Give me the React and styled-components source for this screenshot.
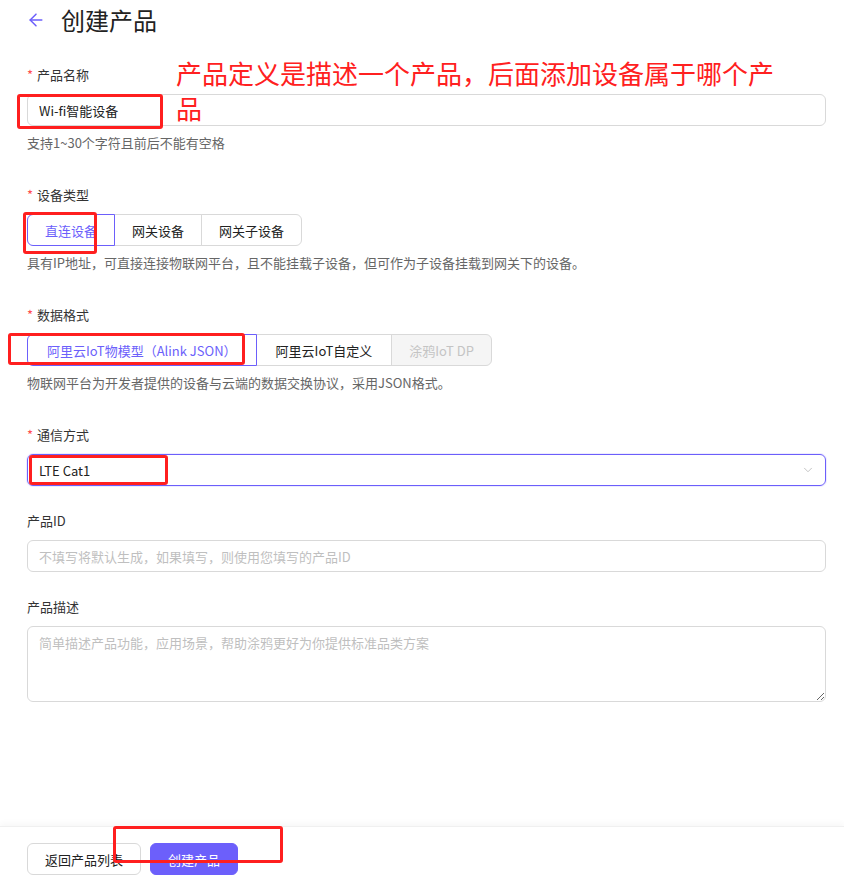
import styled, { createGlobalStyle } from 'styled-components';
import { ArrowLeft, ChevronDown } from 'lucide-react';

const GlobalStyle = createGlobalStyle`
  * { box-sizing: border-box; }
  body {
    margin: 0;
    background: #fff;
    font-family: "Noto Sans CJK SC", "Noto Sans", sans-serif;
    color: #333;
  }
`;

const PRIMARY = '#6c5ffb';

const Page = styled.div`
  position: relative;
  width: 844px;
  height: 887px;
  display: flex;
  flex-direction: column;
  overflow: hidden;
`;

const Header = styled.div`
  display: flex;
  align-items: center;
  gap: 15px;
  height: 40px;
  padding-left: 26px;
`;

const Title = styled.h1`
  margin: 0;
  font-size: 24px;
  font-weight: 400;
  color: #222;
  line-height: 40px;
`;

const Form = styled.div`
  display: flex;
  flex-direction: column;
  padding: 24px 18px 0 27px;
`;

const Item = styled.div`
  display: flex;
  flex-direction: column;
  gap: 8px;
  margin-bottom: ${(p) => (p.$help ? '30px' : '24px')};
`;

const Label = styled.div`
  font-size: 13px;
  line-height: 22px;
  color: #333;
  &::before {
    content: ${(p) => (p.$required ? '"*"' : 'none')};
    color: #ff4d4f;
    margin-right: 4px;
  }
`;

const Help = styled.div`
  font-size: 13px;
  line-height: 22px;
  color: #666;
  margin-top: -2px;
`;

const Input = styled.input`
  height: 32px;
  width: 100%;
  border: 1px solid #d9d9d9;
  border-radius: 6px;
  padding: 0 11px;
  font-family: inherit;
  font-size: 13px;
  color: #222;
  outline: none;
  &::placeholder { color: #bfbfbf; }
`;

const TextArea = styled.textarea`
  height: 76px;
  width: 100%;
  border: 1px solid #d9d9d9;
  border-radius: 6px;
  padding: 6px 11px;
  font-family: inherit;
  font-size: 13px;
  line-height: 20px;
  outline: none;
  &::placeholder { color: #bfbfbf; }
`;

const Select = styled.div`
  height: 32px;
  display: flex;
  align-items: center;
  justify-content: space-between;
  border: 1px solid ${PRIMARY};
  border-radius: 6px;
  padding: 0 10px 0 11px;
  font-size: 13px;
  color: #222;
  box-shadow: 0 0 0 1px rgba(108, 95, 251, 0.12);
`;

const Segmented = styled.div`
  display: flex;
`;

const SegButton = styled.div`
  height: 32px;
  display: flex;
  align-items: center;
  padding: 0 ${(p) => (p.$wide ? '19px' : '17px')};
  font-size: 13px;
  border: 1px solid ${(p) => (p.$active ? PRIMARY : '#d9d9d9')};
  margin-left: -1px;
  position: ${(p) => (p.$active ? 'relative' : 'static')};
  z-index: ${(p) => (p.$active ? 1 : 0)};
  color: ${(p) => (p.$active ? PRIMARY : p.$disabled ? '#c4c4c4' : '#222')};
  background: ${(p) => (p.$disabled ? '#f5f5f5' : '#fff')};
  &:first-child {
    margin-left: 0;
    border-radius: 6px 0 0 6px;
  }
  &:last-child { border-radius: 0 6px 6px 0; }
`;

const Footer = styled.div`
  margin-top: auto;
  display: flex;
  gap: 9px;
  padding: 16px 27px 12px;
  border-top: 1px solid #f0f0f0;
  box-shadow: 0 -3px 6px rgba(0, 0, 0, 0.03);
`;

const Button = styled.button`
  height: 32px;
  padding: 0 17px;
  border-radius: 6px;
  font-family: inherit;
  font-size: 13px;
  border: 1px solid ${(p) => (p.$primary ? PRIMARY : '#d9d9d9')};
  background: ${(p) => (p.$primary ? PRIMARY : '#fff')};
  color: ${(p) => (p.$primary ? '#fff' : '#222')};
`;

const Note = styled.div`
  position: absolute;
  left: 176px;
  top: 55px;
  width: 612px;
  font-size: 26px;
  line-height: 35px;
  color: #ff2020;
`;

const Mark = styled.div`
  position: absolute;
  border: 3px solid #ff1f1f;
  border-radius: 3px;
  z-index: 5;
  pointer-events: none;
`;

const marks = [
  { left: 17, top: 94, width: 146, height: 35 },
  { left: 23, top: 212, width: 74, height: 42 },
  { left: 8, top: 333, width: 237, height: 32 },
  { left: 29, top: 455, width: 139, height: 30 },
  { left: 113, top: 826, width: 170, height: 37 },
];

export default function App() {
  return (
    <>
      <GlobalStyle />
      <Page>
        <Header>
          <ArrowLeft size={20} color={PRIMARY} strokeWidth={1.8} />
          <Title>创建产品</Title>
        </Header>
        <Form>
          <Item $help>
            <Label $required>产品名称</Label>
            <Input defaultValue="Wi-fi智能设备" />
            <Help>支持1~30个字符且前后不能有空格</Help>
          </Item>
          <Item $help>
            <Label $required>设备类型</Label>
            <Segmented>
              <SegButton $active>直连设备</SegButton>
              <SegButton>网关设备</SegButton>
              <SegButton>网关子设备</SegButton>
            </Segmented>
            <Help>具有IP地址，可直接连接物联网平台，且不能挂载子设备，但可作为子设备挂载到网关下的设备。</Help>
          </Item>
          <Item $help>
            <Label $required>数据格式</Label>
            <Segmented>
              <SegButton $active $wide>阿里云IoT物模型（Alink JSON）</SegButton>
              <SegButton $wide>阿里云IoT自定义</SegButton>
              <SegButton $disabled>涂鸦IoT DP</SegButton>
            </Segmented>
            <Help>物联网平台为开发者提供的设备与云端的数据交换协议，采用JSON格式。</Help>
          </Item>
          <Item>
            <Label $required>通信方式</Label>
            <Select>
              <span>LTE Cat1</span>
              <ChevronDown size={14} color="#bbb" strokeWidth={1.5} />
            </Select>
          </Item>
          <Item>
            <Label>产品ID</Label>
            <Input placeholder="不填写将默认生成，如果填写，则使用您填写的产品ID" />
          </Item>
          <Item>
            <Label>产品描述</Label>
            <TextArea placeholder="简单描述产品功能，应用场景，帮助涂鸦更好为你提供标准品类方案" />
          </Item>
        </Form>
        <Footer>
          <Button>返回产品列表</Button>
          <Button $primary>创建产品</Button>
        </Footer>
        <Note>产品定义是描述一个产品，后面添加设备属于哪个产品</Note>
        {marks.map((m, i) => (
          <Mark key={i} style={m} />
        ))}
      </Page>
    </>
  );
}
